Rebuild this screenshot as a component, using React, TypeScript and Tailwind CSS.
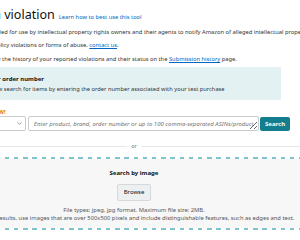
import { ChevronDown } from 'lucide-react';

// Cropped view of the "Report a violation" page: left edge of the page lies off-screen
export default function App() {
    return (
        <div className="w-[300px] h-[240px] overflow-hidden bg-white text-[#333] font-['Noto_Sans',sans-serif]">
            {/* Title row */}
            <div className="-ml-[49px] mt-[6px] h-[18px] flex items-baseline gap-[4px] whitespace-nowrap">
                <h1 className="text-[12.5px] leading-[18px] text-[#111]">Report a violation</h1>
                <a className="text-[5.75px] text-[#0066c0]">Learn how to best use this tool</a>
            </div>

            {/* Intro lines */}
            <p className="-ml-[17px] mt-[4px] h-[9px] text-[5.75px] leading-[9px] whitespace-nowrap">
                Intended for use by intellectual property rights owners and their agents to notify Amazon of alleged intellectual property infringement.
            </p>
            <p className="-ml-[33px] mt-[4px] h-[9px] text-[5.75px] leading-[9px] whitespace-nowrap">
                For other policy violations or forms of abuse, <a className="text-[#0066c0] underline">contact us</a>.
            </p>
            <p className="-ml-[12px] mt-[5px] h-[9px] text-[5.75px] leading-[9px] whitespace-nowrap">
                View the history of your reported violations and their status on the <a className="text-[#0066c0] underline">Submission history</a> page.
            </p>

            {/* Order number search */}
            <div className="-ml-[30px] w-[320px]">
                <div className="mt-[3px] w-[311px] h-[33px] bg-[#e4f1f3] pl-[20px] pt-[8px] whitespace-nowrap">
                    <div className="-ml-[3px] h-[9px] text-[6px] leading-[9px] font-bold text-[#111]">Your order number</div>
                    <div className="mt-[1px] h-[9px] text-[5.75px] leading-[9px]">Now search for items by entering the order number associated with your test purchase</div>
                </div>
                <div className="mt-[8px] pl-[20px] h-[8px] text-[6px] leading-[8px] font-bold text-[#e47911]">NEW!</div>
                <div className="flex h-[15px]">
                    <div className="w-[56px] h-[15px] border border-[#c9cccc] rounded-[2px] bg-white flex items-center justify-end pr-[2px]">
                        <ChevronDown className="w-[7px] h-[7px] text-[#555]" strokeWidth={2} />
                    </div>
                    <textarea
                        rows={1}
                        className="ml-[2px] w-[232px] h-[15px] border border-[#c9cccc] rounded-[2px] pl-[5px] pt-[3px] text-[6px] leading-[9px] overflow-hidden placeholder:italic placeholder:text-[#767676] outline-none"
                        placeholder="Enter product, brand, order number or up to 100 comma-separated ASINs/product URLs"
                    />
                    <button className="ml-[1px] mt-[1px] w-[30px] h-[14px] bg-[#137e8e] rounded-[2px] text-white text-[6px] font-bold">
                        Search
                    </button>
                </div>
            </div>

            {/* Divider + image search */}
            <div className="-ml-[40px] w-[348px]">
                <div className="mt-[10px] h-[10px] flex items-center">
                    <div className="flex-1 h-px bg-[#e7e7e7]" />
                    <span className="px-[4px] text-[5.5px] text-[#767676]">or</span>
                    <div className="flex-1 h-px bg-[#e7e7e7]" />
                </div>
                <div className="mt-[6px] bg-[#f7f7f7]">
                    <div className="h-[2px] bg-[repeating-linear-gradient(90deg,#7fc4cc_0_4.4px,#ffffff_4.4px_9.2px)] bg-[position:8px_0]" />
                    <div className="pt-[10px] pb-[6px] flex flex-col items-center text-center">
                        <div className="h-[9px] text-[6px] leading-[9px] font-bold text-[#111]">Search by image</div>
                        <button className="mt-[6px] w-[34px] h-[17px] bg-[#edf0f0] border border-[#d5d9d9] rounded-[2px] text-[6px] text-[#111]">
                            Browse
                        </button>
                        <p className="mt-[6px] text-[5.8px] leading-[7.5px] text-[#555] whitespace-nowrap">
                            File types: jpeg, jpg format. Maximum file size: 2MB.
                            <br />
                            For best results, use images that are over 500x500 pixels and include distinguishable features, such as edges and text.
                        </p>
                    </div>
                    <div className="h-[2px] bg-[repeating-linear-gradient(90deg,#7fc4cc_0_4.4px,#ffffff_4.4px_9.2px)] bg-[position:8px_0]" />
                </div>
            </div>
        </div>
    );
}
